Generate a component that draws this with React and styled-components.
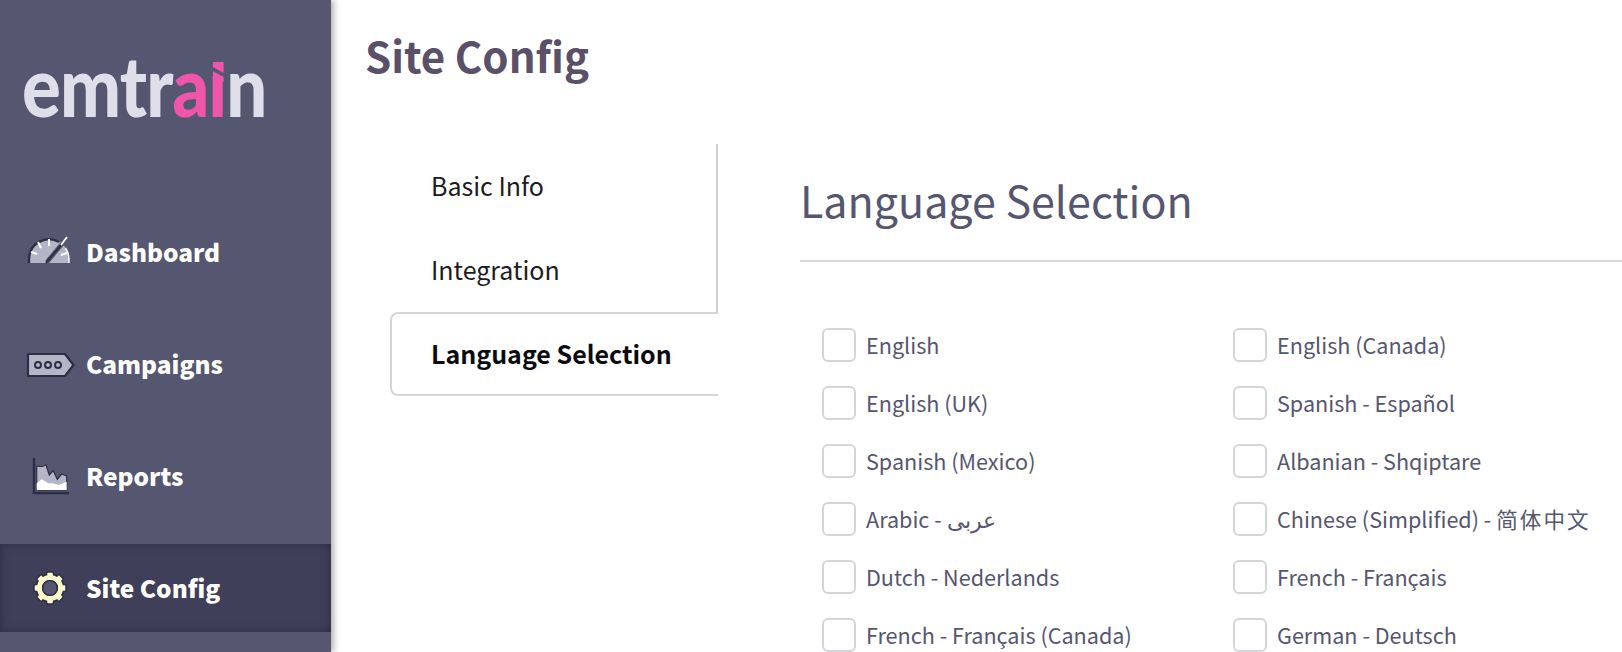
import styled, { createGlobalStyle } from 'styled-components';

const FONT = '"Noto Sans CJK SC", "Noto Sans", sans-serif';

const GlobalStyle = createGlobalStyle`
  html, body {
    margin: 0;
    padding: 0;
    height: 652px;
    overflow: hidden;
    background: #fff;
    font-family: ${FONT};
  }
`;

const Page = styled.div`
  display: flex;
  width: 1622px;
  height: 652px;
  overflow: hidden;
`;

const Sidebar = styled.aside`
  width: 331px;
  height: 652px;
  flex: none;
  background: #55566f;
  box-shadow: 3px 0 6px rgba(0, 0, 0, 0.3);
  position: relative;
  z-index: 1;
`;

const LogoWrap = styled.div`
  height: 208px;
  padding: 39px 0 0 22px;
  box-sizing: border-box;
`;

const Logo = styled.div`
  font-family: Lato, sans-serif;
  font-weight: 900;
  font-size: 84px;
  line-height: 92px;
  letter-spacing: -1px;
  color: #dfdfe9;
  transform: scaleX(0.862);
  transform-origin: left center;
  white-space: nowrap;
`;

const LogoAccent = styled.span`
  color: #ef55aa;
`;

// the logo's i has a slanted wedge in place of a round dot
const LogoI = styled.span`
  position: relative;
  color: #ef55aa;

  &::before {
    content: '';
    position: absolute;
    left: -2px;
    right: 0;
    top: 8px;
    height: 34px;
    background: #55566f;
  }

  &::after {
    content: '';
    position: absolute;
    left: 5px;
    width: 13px;
    top: 28px;
    height: 20px;
    background: #ef55aa;
    clip-path: polygon(0 0, 100% 0, 100% 55%, 0 25%, 0 45%, 100% 75%, 100% 100%, 0 100%);
  }
`;

const Nav = styled.nav`
  display: flex;
  flex-direction: column;
  gap: 24px;
`;

const NavItem = styled.div`
  display: flex;
  align-items: center;
  height: 88px;
  padding-left: 26px;
  color: #fff;
  font-size: 24.4px;
  font-weight: 900;
  background: ${({ $active }) => ($active ? '#3f3f59' : 'transparent')};
  box-shadow: ${({ $active }) => ($active ? 'inset 0 0 10px rgba(30, 30, 50, 0.55)' : 'none')};
`;

const NavText = styled.span`
  margin-bottom: 2px;
`;

const NavIcon = styled.svg`
  width: 50px;
  height: 40px;
  margin-right: 10px;
  flex: none;
`;

const Main = styled.main`
  flex: 1;
  min-width: 0;
  padding-left: 34px;
`;

const PageTitle = styled.h1`
  margin: 0;
  height: 144px;
  padding-top: 27px;
  box-sizing: border-box;
  font-size: 42px;
  line-height: 56px;
  font-weight: 700;
  color: #5a5069;
`;

const Columns = styled.div`
  display: flex;
`;

const Tabs = styled.div`
  width: 328px;
  margin-left: 25px;
  flex: none;
`;

const Tab = styled.div`
  display: flex;
  align-items: center;
  height: 84px;
  box-sizing: border-box;
  padding: 0 0 2px 41px;
  font-size: 25px;
  color: #1c1c22;
  border-right: 2px solid #d0d0d4;
`;

const ActiveTab = styled(Tab)`
  font-weight: 700;
  color: #0c0c10;
  border: 2px solid #d5d5d9;
  border-right: none;
  border-radius: 8px 0 0 8px;
  padding-left: 39px;
`;

const Panel = styled.section`
  flex: 1;
  min-width: 0;
  margin-left: 82px;
`;

const PanelTitle = styled.h2`
  margin: 0;
  height: 118px;
  padding-top: 25px;
  box-sizing: border-box;
  border-bottom: 2px solid #d6d6e0;
  font-size: 43px;
  line-height: 60px;
  font-weight: 400;
  color: #55566f;
`;

const Options = styled.div`
  display: grid;
  grid-template-columns: 411px 1fr;
  grid-auto-rows: 58px;
  padding: 66px 0 0 22px;
`;

const Option = styled.label`
  display: flex;
  align-items: flex-start;
  font-size: 21.6px;
  line-height: 34px;
  color: #55566f;
`;

const Box = styled.span`
  width: 34px;
  height: 34px;
  box-sizing: border-box;
  flex: none;
  margin-right: 10px;
  border: 2px solid #d5d5d9;
  border-radius: 6px;
`;

const CjkText = styled.span`
  letter-spacing: 2px;
`;

const languages = [
  { name: 'English' },
  { name: 'English (Canada)' },
  { name: 'English (UK)' },
  { name: 'Spanish - Español' },
  { name: 'Spanish (Mexico)' },
  { name: 'Albanian - Shqiptare' },
  { name: 'Arabic - عربى' },
  { name: 'Chinese (Simplified) - ', cjk: '简体中文' },
  { name: 'Dutch - Nederlands' },
  { name: 'French - Français' },
  { name: 'French - Français (Canada)' },
  { name: 'German - Deutsch' },
];

const DashboardIcon = () => (
  <NavIcon viewBox="0 0 50 40">
    <path d="M3 31 V27 A20 20 0 0 1 43 27 V31 Z" fill="#b4b5c6" />
    <path d="M3 31 V27 A20 20 0 0 1 33 10" fill="none" stroke="#2a2f45" strokeWidth="2.4" />
    <path d="M39.500 16 A20 20 0 0 1 43 27 V31" fill="none" stroke="#fff" strokeWidth="1.4" />
    <path d="M21 30 L41 6" stroke="#55566f" strokeWidth="4.5" />
    <path d="M20 31 L35 13" stroke="#2a2f45" strokeWidth="2" />
    <path d="M35 13 L41 5" stroke="#fff" strokeWidth="1.8" />
    <path d="M23 7 V14 M12 10 L15 16 M5 20 L11 22 M41 21 L35 23" stroke="#fff" strokeWidth="2" />
  </NavIcon>
);

const CampaignIcon = () => (
  <NavIcon viewBox="0 0 50 40">
    <path d="M2 10 H39 L47.500 21 L39 32 H2 Z" fill="#b4b5c6" stroke="#2a2f45" strokeWidth="2.2" strokeLinejoin="round" />
    <circle cx="12" cy="21" r="3" fill="none" stroke="#2a2f45" strokeWidth="2" />
    <circle cx="22" cy="21" r="3" fill="none" stroke="#2a2f45" strokeWidth="2" />
    <circle cx="32" cy="21" r="3" fill="none" stroke="#2a2f45" strokeWidth="2" />
  </NavIcon>
);

const ReportIcon = () => (
  <NavIcon viewBox="0 0 50 40">
    <path d="M10.700 10 L15.700 10.700 L20 9 L23.300 19 L27.300 14.700 L31.300 23.300 L35.700 18 L40.700 20 V34 H10.700 Z" fill="#b4b5c6" stroke="#2a2f45" strokeWidth="1.2" />
    <path d="M10.700 27.300 L15.700 23.300 L22.300 27.300 L27.300 27.300 L32.300 29 L40.700 25.700 V34 H10.700 Z" fill="#fff" />
    <path d="M8 2 V37 H43" fill="none" stroke="#2a2f45" strokeWidth="2.4" />
  </NavIcon>
);

const GearIcon = () => (
  <NavIcon viewBox="0 0 50 40">
    <g transform="translate(24 20)">
      <circle r="10.5" fill="none" stroke="#2a2f45" strokeWidth="8" />
      {[0, 45, 90, 135, 180, 225, 270, 315].map((a) => (
        <rect key={a} x="-3.5" y="-16" width="7" height="6" rx="1.5" fill="#fdf8cc" stroke="#2a2f45" strokeWidth="1.5" transform={`rotate(${a})`} />
      ))}
      <circle r="10.5" fill="none" stroke="#fdf8cc" strokeWidth="5" />
      <circle r="7.4" fill="#55566f" stroke="#2a2f45" strokeWidth="1.4" />
    </g>
  </NavIcon>
);

const App = () => (
  <Page>
    <GlobalStyle />
    <Sidebar>
      <LogoWrap>
        <Logo>
          emtr<LogoAccent>a</LogoAccent>
          <LogoI>i</LogoI>n
        </Logo>
      </LogoWrap>
      <Nav>
        <NavItem>
          <DashboardIcon />
          <NavText>Dashboard</NavText>
        </NavItem>
        <NavItem>
          <CampaignIcon />
          <NavText>Campaigns</NavText>
        </NavItem>
        <NavItem>
          <ReportIcon />
          <NavText>Reports</NavText>
        </NavItem>
        <NavItem $active>
          <GearIcon />
          <NavText>Site Config</NavText>
        </NavItem>
      </Nav>
    </Sidebar>
    <Main>
      <PageTitle>Site Config</PageTitle>
      <Columns>
        <Tabs>
          <Tab>Basic Info</Tab>
          <Tab>Integration</Tab>
          <ActiveTab>Language Selection</ActiveTab>
        </Tabs>
        <Panel>
          <PanelTitle>Language Selection</PanelTitle>
          <Options>
            {languages.map(({ name, cjk }) => (
              <Option key={name}>
                <Box />
                <span>
                  {name}
                  {cjk && <CjkText>{cjk}</CjkText>}
                </span>
              </Option>
            ))}
          </Options>
        </Panel>
      </Columns>
    </Main>
  </Page>
);

export default App;
